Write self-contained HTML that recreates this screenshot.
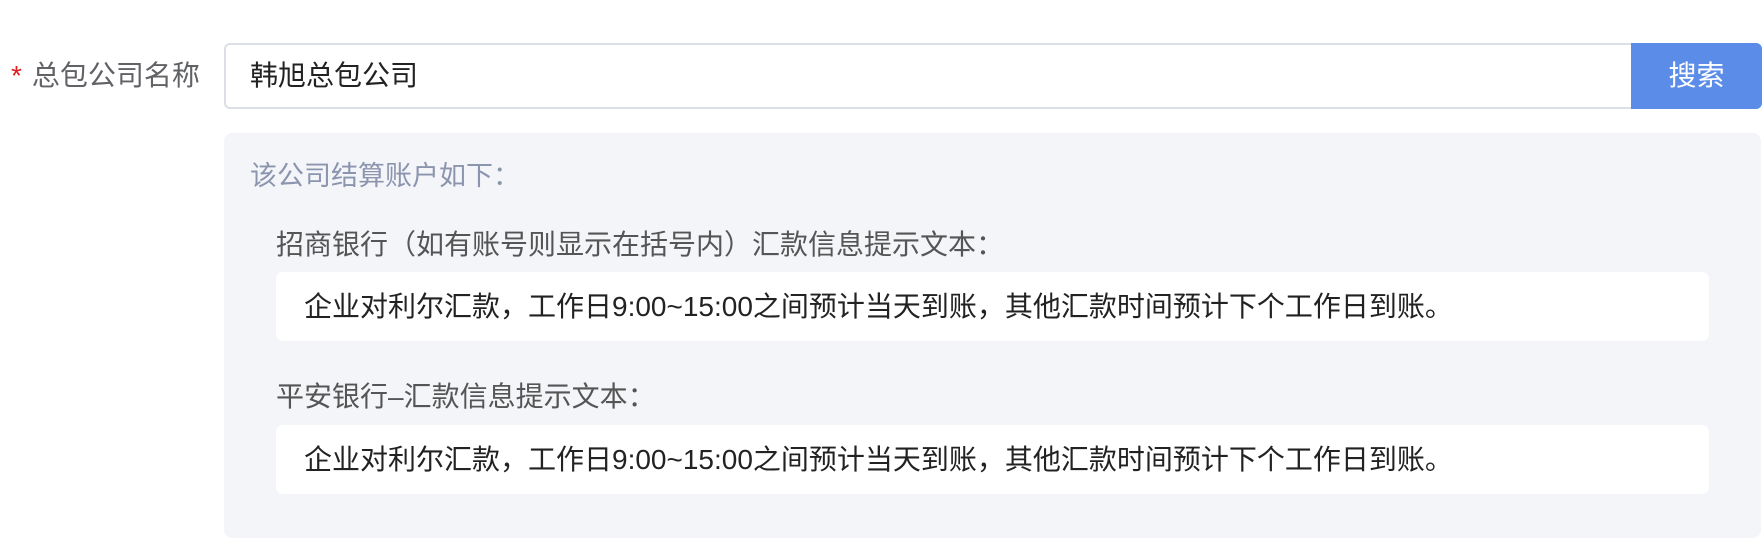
<!DOCTYPE html>
<html><head><meta charset="utf-8"><style>
*{margin:0;padding:0;box-sizing:border-box}
body{width:1764px;height:556px;background:#fff;font-family:"Liberation Sans","Noto Sans CJK SC",sans-serif;position:relative;overflow:hidden}
.a{position:absolute;white-space:nowrap;line-height:1}
.label{left:11px;top:62px;font-size:28px;color:#606266}
.label b{color:#e02020;font-weight:normal;margin-right:10px}
.input{position:absolute;left:224px;top:43px;width:1538px;height:66px;border:2px solid #dcdfe6;border-radius:6px;background:#fff}
.input span{position:absolute;left:24px;top:17px;font-size:28px;color:#222}
.btn{position:absolute;left:1631px;top:43px;width:131px;height:66px;background:#5b8ce8;border-radius:0 6px 6px 0;color:#fff;font-size:28px;text-align:center;line-height:66px}
.panel{position:absolute;left:224px;top:133px;width:1537px;height:405px;background:#f4f5f9;border-radius:8px}
.box{position:absolute;left:276px;width:1433px;height:69px;background:#fff;border-radius:7px}
.box span{position:absolute;left:28px;top:21px;font-size:28px;color:#222}
</style></head><body>
<div class="a label"><b>*</b>总包公司名称</div>
<div class="input"><span class="a">韩旭总包公司</span></div>
<div class="btn">搜索</div>
<div class="panel"></div>
<div class="a" style="left:250px;top:163px;font-size:27px;color:#8c95ae">该公司结算账户如下：</div>
<div class="a" style="left:276px;top:231px;font-size:28px;color:#555">招商银行（如有账号则显示在括号内）汇款信息提示文本：</div>
<div class="box" style="top:272px"><span class="a">企业对利尔汇款，工作日9:00~15:00之间预计当天到账，其他汇款时间预计下个工作日到账。</span></div>
<div class="a" style="left:276px;top:383px;font-size:28px;color:#555">平安银行–汇款信息提示文本：</div>
<div class="box" style="top:425px"><span class="a">企业对利尔汇款，工作日9:00~15:00之间预计当天到账，其他汇款时间预计下个工作日到账。</span></div>
</body></html>
